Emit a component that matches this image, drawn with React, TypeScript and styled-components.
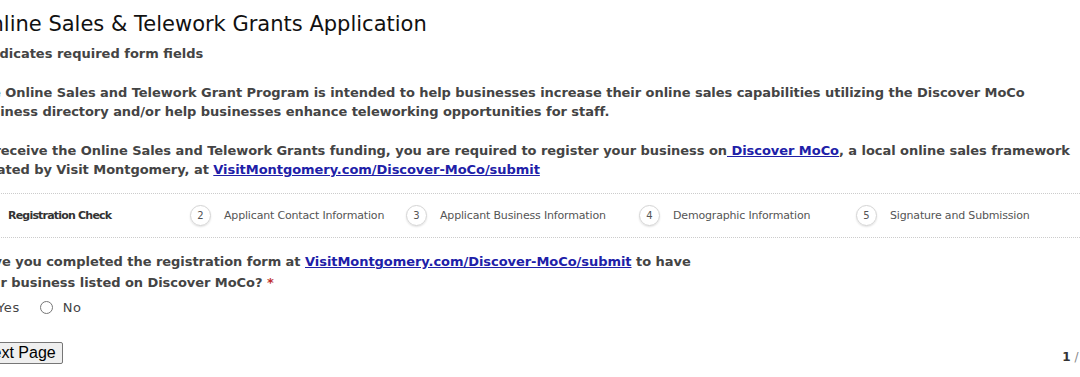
import React from "react";
import styled, { createGlobalStyle } from "styled-components";

const GlobalStyle = createGlobalStyle`
  html, body {
    margin: 0;
    padding: 0;
    background: #ffffff;
    overflow: hidden;
  }
  body {
    font-family: "DejaVu Sans", Verdana, sans-serif;
    color: #444444;
  }
`

const Page = styled.div`
  width: 1126px;
  margin-left: -26px;
  padding-top: 9px;
`

const Title = styled.h1`
  margin: 0;
  font-size: 21px;
  font-weight: normal;
  color: #111111;
  line-height: 30px;
`

const Required = styled.div`
  margin-top: 6px;
  font-size: 13px;
  font-weight: bold;
  color: #444444;
  line-height: 18px;
`

const Intro = styled.p`
  margin: 20px 0 0 0;
  width: 1102px;
  font-size: 13px;
  letter-spacing: -0.05px;
  font-weight: bold;
  line-height: 19px;
  color: #444444;
`

const Link = styled.a`
  color: #2020a8;
  text-decoration: underline;
`

const Steps = styled.div`
  display: flex;
  align-items: center;
  margin-top: 14px;
  height: 43px;
  border-top: 1px dotted #cccccc;
  border-bottom: 1px dotted #cccccc;
`

const Step = styled.div<{ $width: number }>`
  display: flex;
  align-items: center;
  gap: 13px;
  flex: 0 0 ${(p) => p.$width}px;
  font-size: 11px;
  color: #555555;
`

const Circle = styled.span`
  display: inline-flex;
  align-items: center;
  justify-content: center;
  width: 19px;
  height: 19px;
  border: 1px solid #d4d4d4;
  border-radius: 50%;
  box-shadow: 0 1px 2px rgba(0, 0, 0, 0.12);
  font-size: 10px;
  color: #555555;
`

const StepLabel = styled.span<{ $active?: boolean }>`
  font-weight: ${(p) => (p.$active ? "bold" : "normal")};
  letter-spacing: ${(p) => (p.$active ? "-0.8px" : "-0.17px")};
  color: ${(p) => (p.$active ? "#333333" : "#555555")};
`

const Question = styled.div`
  margin-top: 13px;
  font-size: 13px;
  letter-spacing: -0.05px;
  font-weight: bold;
  line-height: 21px;
  color: #444444;
`

const Star = styled.span`
  color: #c03030;
`

const Options = styled.div`
  display: flex;
  align-items: center;
  gap: 20px;
  margin-top: 4px;
  font-size: 13px;
  color: #444444;
  height: 20px;
`

const Option = styled.label`
  display: flex;
  align-items: center;
  gap: 10px;
  letter-spacing: 0.6px;
`

const Radio = styled.input`
  margin: 0;
  width: 13px;
  height: 13px;
`

const Footer = styled.div`
  display: flex;
  justify-content: space-between;
  align-items: center;
  margin-top: 25px;
  width: 1116px;
`

const NextButton = styled.button`
  font-family: "Liberation Sans", Arial, sans-serif;
  font-size: 16px;
  height: 22px;
  padding: 0 6px;
  background: #efefef;
  border: 1px solid #767676;
  border-radius: 2px;
  color: #000000;
`

const PageCount = styled.div`
  font-size: 12px;
  color: #888888;
  padding-top: 8px;

  b {
    color: #333333;
  }
`

const steps = [
  { n: 1, label: "Registration Check", width: 216 },
  { n: 2, label: "Applicant Contact Information", width: 216 },
  { n: 3, label: "Applicant Business Information", width: 233 },
  { n: 4, label: "Demographic Information", width: 217 },
  { n: 5, label: "Signature and Submission", width: 230 },
]

export default function App() {
  return (
    <>
      <GlobalStyle />
      <Page>
        <Title>Online Sales &amp; Telework Grants Application</Title>
        <Required>* Indicates required form fields</Required>
        <Intro>
          The Online Sales and Telework Grant Program is intended to help businesses increase their online sales
          capabilities utilizing the Discover MoCo business directory and/or help businesses enhance teleworking
          opportunities for staff.
        </Intro>
        <Intro>
          To receive the Online Sales and Telework Grants funding, you are required to register your business on
          <Link href="#"> Discover MoCo</Link>, a local online sales framework created by Visit Montgomery, at{" "}
          <Link href="#">VisitMontgomery.com/Discover-MoCo/submit</Link>
        </Intro>
        <Steps>
          {steps.map((s) => (
            <Step key={s.n} $width={s.width}>
              <Circle>{s.n}</Circle>
              <StepLabel $active={s.n === 1}>{s.label}</StepLabel>
            </Step>
          ))}
        </Steps>
        <Question>
          Have you completed the registration form at{" "}
          <Link href="#">VisitMontgomery.com/Discover-MoCo/submit</Link> to have
          <br />
          your business listed on Discover MoCo? <Star>*</Star>
        </Question>
        <Options>
          <Option>
            <Radio type="radio" name="reg" />
            Yes
          </Option>
          <Option>
            <Radio type="radio" name="reg" />
            No
          </Option>
        </Options>
        <Footer>
          <NextButton>Next Page</NextButton>
          <PageCount>
            <b>1</b> / 5
          </PageCount>
        </Footer>
      </Page>
    </>
  )
}
